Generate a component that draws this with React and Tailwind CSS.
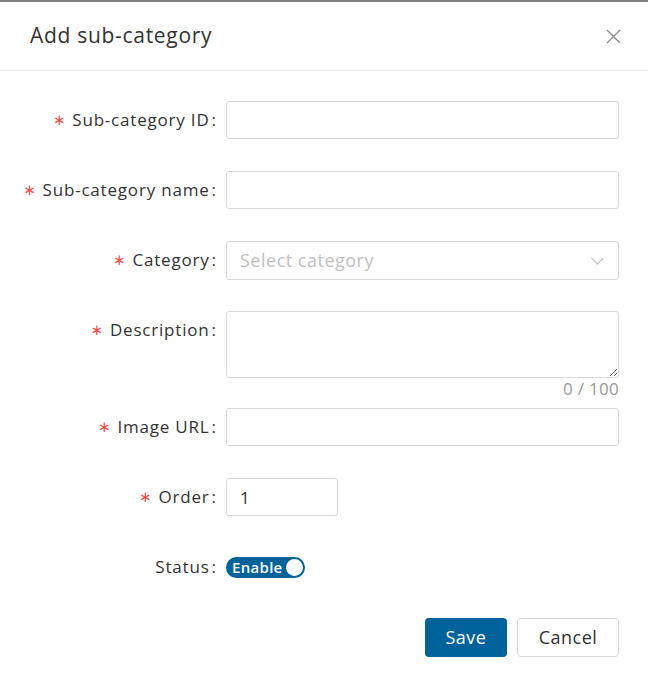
import { useState } from 'react';

const Label = ({ text, required = true }) => (
  <div className="w-[217px] shrink-0 h-[38px] flex items-center justify-end text-[17px] tracking-[0.8px] text-[#333333]">
    {required && (
      <span className="text-[#ff4d4f] mr-[6px] text-[15px] font-['DejaVu_Sans',sans-serif]">∗</span>
    )}
    <span className="whitespace-nowrap">{text}</span>
    <span className="ml-[2px] mr-[1px] tracking-normal">:</span>
  </div>
);

export default function App() {
  const [enabled, setEnabled] = useState(true);

  return (
    <div className="min-h-screen bg-white border-t-2 border-[#808080] font-['Open_Sans',sans-serif] text-[#333333]">
      {/* Header */}
      <div className="h-[69px] flex items-center justify-between pl-[30px] pr-[26px] border-b border-[#f0f0f0]">
        <h2 className="text-[21px] font-normal text-[#333333] tracking-[0.7px]">Add sub-category</h2>
        <button className="w-[18px] h-[18px] flex items-center justify-center text-[#8c8c8c]">
          <svg width="15" height="15" viewBox="0 0 15 15" fill="none" stroke="currentColor" strokeWidth="1.4">
            <path d="M1 1L14 14M14 1L1 14" />
          </svg>
        </button>
      </div>

      {/* Form */}
      <div className="pt-[30px] pr-[29px]">
        <div className="flex mb-[32px]">
          <Label text="Sub-category ID" />
          <input className="ml-[9px] flex-1 h-[38px] border border-[#d9d9d9] rounded-[3px] px-3 outline-none" />
        </div>

        <div className="flex mb-[32px]">
          <Label text="Sub-category name" />
          <input className="ml-[9px] flex-1 h-[38px] border border-[#d9d9d9] rounded-[3px] px-3 outline-none" />
        </div>

        <div className="flex mb-[31px]">
          <Label text="Category" />
          <div className="ml-[9px] flex-1 h-[39px] border border-[#d9d9d9] rounded-[3px] pl-[13px] pr-[14px] flex items-center justify-between">
            <span className="text-[18px] tracking-[0.5px] text-[#bfbfbf]">Select category</span>
            <svg width="13" height="8" viewBox="0 0 13 8" fill="none" stroke="#bfbfbf" strokeWidth="1.2">
              <path d="M0.5 0.8L6.5 7L12.5 0.8" />
            </svg>
          </div>
        </div>

        <div className="flex mb-[8px]">
          <Label text="Description" />
          <div className="ml-[9px] flex-1 flex flex-col">
            <textarea className="h-[67px] border border-[#d9d9d9] rounded-[3px] px-3 py-1 outline-none resize-y" />
            <div className="h-[22px] text-right text-[17px] tracking-[0.3px] leading-[22px] text-[#999999]">0 / 100</div>
          </div>
        </div>

        <div className="flex mb-[32px]">
          <Label text="Image URL" />
          <input className="ml-[9px] flex-1 h-[38px] border border-[#d9d9d9] rounded-[3px] px-3 outline-none" />
        </div>

        <div className="flex mb-[32px]">
          <Label text="Order" />
          <input
            defaultValue="1"
            className="ml-[9px] w-[112px] h-[38px] border border-[#d9d9d9] rounded-[3px] px-[13px] text-[17px] text-[#333333] outline-none"
          />
        </div>

        <div className="flex mb-[32px]">
          <Label text="Status" required={false} />
          <div className="ml-[9px] h-[38px] flex items-center">
            <button
              onClick={() => setEnabled(!enabled)}
              className="h-[21px] w-[79px] rounded-full bg-[#00629b] flex items-center justify-between pl-[6px] pr-[2px]"
            >
              <span className="text-[15px] tracking-[0.3px] font-semibold text-white leading-none">Enable</span>
              <span className="w-[17px] h-[17px] rounded-full bg-white" />
            </button>
          </div>
        </div>

        <div className="flex justify-end gap-[10px]">
          <button className="w-[82px] h-[39px] rounded-[4px] bg-[#00629b] text-white text-[18px] tracking-[0.5px]">Save</button>
          <button className="w-[102px] h-[39px] rounded-[4px] border border-[#d9d9d9] bg-white text-[#333333] text-[18px] tracking-[0.5px]">Cancel</button>
        </div>
      </div>
    </div>
  );
}
